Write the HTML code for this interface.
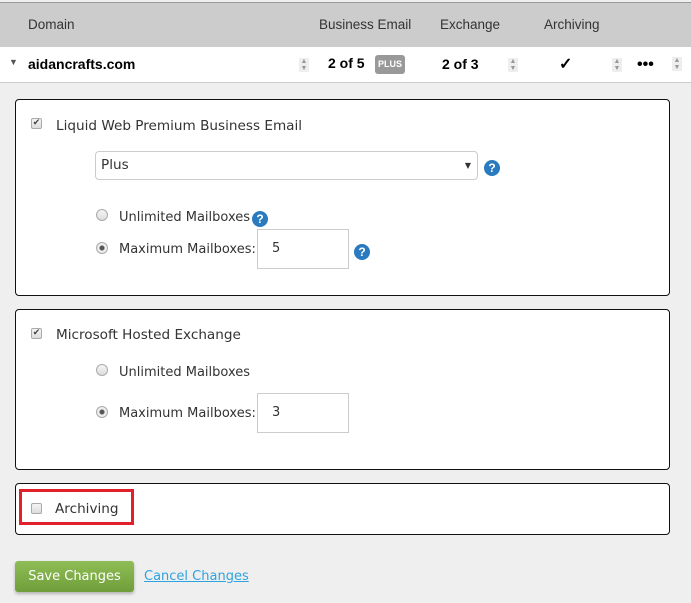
<!DOCTYPE html>
<html><head><style>
body{margin:0;width:691px;height:603px;background:#efefef;position:relative;overflow:hidden;font-family:"DejaVu Sans",Verdana,sans-serif;font-size:13px;color:#333}
.a{position:absolute}
.hdr{left:0;top:2px;width:691px;height:45px;background:#ccc;border-top:1px solid #999;font-family:"Liberation Sans",sans-serif;font-size:13.5px;color:#333}
.row{left:0;top:47px;width:691px;height:35px;background:#fff;border-bottom:1px solid #ccc;font-family:"Liberation Sans",sans-serif;font-weight:bold;font-size:14px;color:#000}
.panel{left:15px;width:655px;background:#fff;border:1px solid #111;border-radius:4px;box-sizing:border-box}
.cb{width:11px;height:11px;border:1px solid #aaa;border-radius:2px;background:linear-gradient(#f4f4f4,#ddd);box-sizing:border-box}
.rd{width:12px;height:12px;border:1px solid #aaa;border-radius:50%;background:linear-gradient(#f4f4f4,#ddd);box-sizing:border-box}
.q{width:16px;height:16px;border-radius:50%;background:#2a7ac0;color:#fff;font:bold 12px/16px "Liberation Sans",sans-serif;text-align:center}
.inp{background:#fff;border:1px solid #ccc;box-sizing:border-box;padding-left:14px;font-size:13px}
.sort{width:10px;height:14px;background:#eee;font-size:7px;line-height:7px;color:#999;text-align:center}
.t{font-size:13.6px}
</style></head><body>
<div class="a hdr">
 <span class="a" style="left:28px;top:14px">Domain</span>
 <span class="a" style="left:319px;top:14px">Business Email</span>
 <span class="a" style="left:440px;top:14px">Exchange</span>
 <span class="a" style="left:544px;top:14px">Archiving</span>
</div>
<div class="a row">
 <span class="a" style="left:9px;top:10px;font-size:9px;color:#555">▼</span>
 <span class="a" style="left:28px;top:9px">aidancrafts.com</span>
 <div class="a sort" style="left:299px;top:11px">▲<br>▼</div>
 <span class="a" style="left:328px;top:8px">2 of 5</span>
 <span class="a" style="left:375px;top:8px;width:30px;height:19px;background:#999;border-radius:3px;color:#fff;font-size:9px;line-height:19px;text-align:center">PLUS</span>
 <span class="a" style="left:442px;top:9px">2 of 3</span>
 <div class="a sort" style="left:508px;top:11px">▲<br>▼</div>
 <span class="a" style="left:559px;top:7px;font-size:16px">✓</span>
 <div class="a sort" style="left:612px;top:11px">▲<br>▼</div>
 <span class="a" style="left:637px;top:9px;font-size:16px">•••</span>
 <div class="a sort" style="left:672px;top:10px">▲<br>▼</div>
</div>

<div class="a panel" style="top:99px;height:197px">
 <div class="a cb" style="left:15px;top:18px;font-size:9px;line-height:9px;color:#444;text-align:center">✔</div>
 <span class="a t" style="left:40px;top:18px">Liquid Web Premium Business Email</span>
 <div class="a inp" style="left:79px;top:51px;width:383px;height:29px;border-radius:4px;padding-left:5px;line-height:27px;font-size:13.6px">Plus<span class="a" style="right:6px;top:0;font-size:8px">▼</span></div>
 <div class="a q" style="left:468px;top:60px">?</div>
 <div class="a rd" style="left:80px;top:109px"></div>
 <span class="a" style="left:103px;top:110px">Unlimited Mailboxes</span>
 <div class="a q" style="left:236px;top:111px">?</div>
 <div class="a rd" style="left:80px;top:142px;background:radial-gradient(#555 2px,#eee 3px)"></div>
 <span class="a" style="left:103px;top:142px">Maximum Mailboxes:</span>
 <div class="a inp" style="left:241px;top:129px;width:92px;height:40px;line-height:38px">5</div>
 <div class="a q" style="left:338px;top:144px">?</div>
</div>

<div class="a panel" style="top:309px;height:161px">
 <div class="a cb" style="left:15px;top:18px;font-size:9px;line-height:9px;color:#444;text-align:center">✔</div>
 <span class="a t" style="left:40px;top:17px">Microsoft Hosted Exchange</span>
 <div class="a rd" style="left:80px;top:54px"></div>
 <span class="a" style="left:103px;top:55px">Unlimited Mailboxes</span>
 <div class="a rd" style="left:80px;top:96px;background:radial-gradient(#555 2px,#eee 3px)"></div>
 <span class="a" style="left:103px;top:96px">Maximum Mailboxes:</span>
 <div class="a inp" style="left:241px;top:83px;width:92px;height:40px;line-height:38px">3</div>
</div>

<div class="a panel" style="top:483px;height:52px">
 <div class="a" style="left:3px;top:5px;width:115px;height:36px;border:3px solid #e0202a;box-sizing:border-box"></div>
 <div class="a cb" style="left:15px;top:19px"></div>
 <span class="a t" style="left:39px;top:17px">Archiving</span>
</div>

<div class="a" style="left:15px;top:561px;width:119px;height:31px;border-radius:3px;background:linear-gradient(#8fbc55,#6f9e3a);box-shadow:0 2px 3px rgba(0,0,0,.25);color:#fff;font-size:13px;line-height:31px;text-align:center">Save Changes</div>
<span class="a" style="left:144px;top:569px;color:#2ea3e0;text-decoration:underline;font-size:13px">Cancel Changes</span>
</body></html>
